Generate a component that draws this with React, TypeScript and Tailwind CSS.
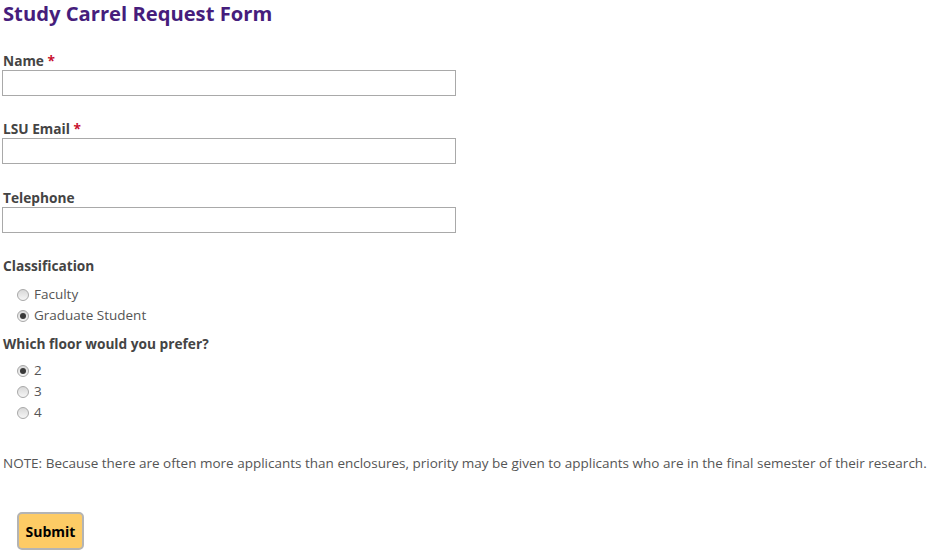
import React from "react";

function Radio({ label, checked }: { label: string; checked?: boolean }) {
  return (
    <label className="flex items-center h-[21px] pl-[17px] text-[#555]">
      <span className="flex items-center justify-center w-[12px] h-[12px] rounded-full border border-[#a8a8a8] bg-gradient-to-b from-[#d8d8d8] to-[#f6f6f6]">
        {checked && <span className="w-[6px] h-[6px] rounded-full bg-[#3a3a3a]" />}
      </span>
      <span className="ml-[5px]">{label}</span>
    </label>
  );
}

function Field({ label, required, top }: { label: string; required?: boolean; top: string }) {
  return (
    <div className={top}>
      <div className="pt-px leading-[18px] font-bold text-[#444] text-[13.7px] pl-[3px]">
        {label}
        {required && <span className="text-[#c8102e]"> *</span>}
      </div>
      <input type="text" className="ml-[2px] block w-[454px] h-[26px] border border-[#a9a9a9] bg-white" />
    </div>
  );
}

export default function App() {
  return (
    <div className="bg-white text-[13.5px] min-h-[552px]" style={{ fontFamily: '"Open Sans", "Noto Sans", sans-serif' }}>
      <h1 className="text-[20.2px] leading-[26px] font-bold text-[#461d7c] pl-[3px]">Study Carrel Request Form</h1>

      <Field label="Name" required top="mt-[25px]" />
      <Field label="LSU Email" required top="mt-[23px]" />
      <Field label="Telephone" top="mt-[24px]" />

      <div className="mt-[24px] leading-[18px] font-bold text-[#444] text-[13.7px] pl-[3px]">Classification</div>
      <div className="mt-[9px]">
        <Radio label="Faculty" />
        <Radio label="Graduate Student" checked />
      </div>

      <div className="mt-[9px] leading-[18px] font-bold text-[#444] text-[13.7px] pl-[3px]">Which floor would you prefer?</div>
      <div className="mt-[7px]">
        <Radio label="2" checked />
        <Radio label="3" />
        <Radio label="4" />
      </div>

      <p className="mt-[31px] leading-[18px] text-[#555] pl-[3px] whitespace-nowrap">
        NOTE: Because there are often more applicants than enclosures, priority may be given to applicants who are in the final semester of their research.
      </p>

      <button className="mt-[40px] ml-[17px] w-[67px] h-[38px] rounded-[5px] border-2 border-[#b4b4b4] bg-[#fdcb65] font-bold text-black text-[14px]">
        Submit
      </button>
    </div>
  );
}
